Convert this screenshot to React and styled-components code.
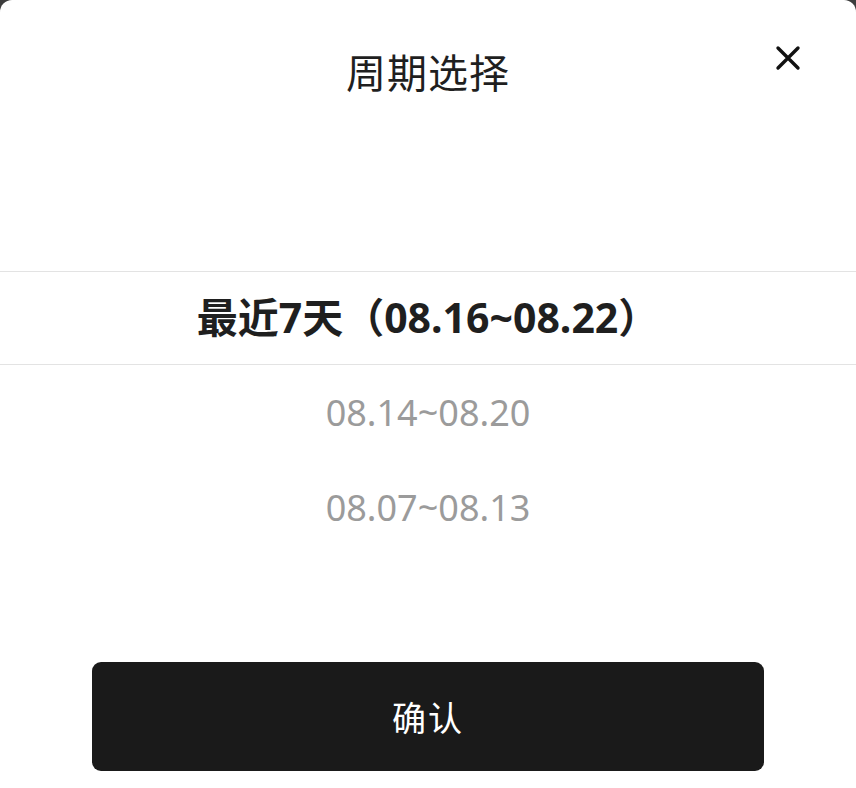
import React, { useState } from "react";
import styled, { createGlobalStyle } from "styled-components";

const GlobalStyle = createGlobalStyle`
  html, body {
    margin: 0;
    padding: 0;
    background: #3d3d3d;
  }
  * {
    box-sizing: border-box;
  }
`;

const Sheet = styled.div`
  display: flex;
  flex-direction: column;
  height: 788px;
  background: #ffffff;
  border-radius: 12px 12px 0 0;
  font-family: "Noto Sans", "Noto Sans CJK SC", sans-serif;
  overflow: hidden;
`;

const Header = styled.div`
  display: grid;
  grid-template-columns: 1fr auto 1fr;
  align-items: center;
  height: 142px;
`;

const Title = styled.h1`
  grid-column: 2;
  margin: 0;
  font-size: 40px;
  font-weight: 400;
  color: #1f1f1f;
  letter-spacing: 1px;
`;

const CloseButton = styled.button`
  grid-column: 3;
  justify-self: end;
  align-self: start;
  margin: 44px 54px 0 0;
  width: 28px;
  height: 28px;
  padding: 0;
  border: none;
  background: transparent;
  display: flex;
  align-items: center;
  justify-content: center;
  cursor: pointer;
`;

const Picker = styled.div`
  display: flex;
  flex-direction: column;
  margin-top: 129px;
`;

const Option = styled.div`
  display: flex;
  align-items: center;
  justify-content: center;
  height: ${(p) => (p.$active ? "94px" : "95px")};
  padding-bottom: ${(p) => (p.$active ? "7px" : "0")};
  font-size: ${(p) => (p.$active ? "41px" : "36px")};
  font-weight: ${(p) => (p.$active ? 700 : 400)};
  color: ${(p) => (p.$active ? "#1f1f1f" : "#9b9b9b")};
  border-top: ${(p) => (p.$active ? "1px solid #e3e3e3" : "none")};
  border-bottom: ${(p) => (p.$active ? "1px solid #e3e3e3" : "none")};
  cursor: pointer;
`;

const Footer = styled.div`
  display: flex;
  padding: 107px 92px 0;
`;

const ConfirmButton = styled.button`
  flex: 1;
  height: 109px;
  border: none;
  border-radius: 9px;
  background: #1a1a1a;
  color: #ffffff;
  font-family: inherit;
  font-size: 34px;
  letter-spacing: 2px;
  cursor: pointer;
`;

const periods = [
  "最近7天（08.16~08.22）",
  "08.14~08.20",
  "08.07~08.13",
];

export default function App() {
  const [selected, setSelected] = useState(0);

  return (
    <>
      <GlobalStyle />
      <Sheet>
        <Header>
          <Title>周期选择</Title>
          <CloseButton aria-label="关闭">
            <svg width="26" height="26" viewBox="0 0 26 26">
              <path
                d="M3 3 L23 23 M23 3 L3 23"
                stroke="#111"
                strokeWidth="3.4"
                strokeLinecap="round"
              />
            </svg>
          </CloseButton>
        </Header>
        <Picker>
          {periods.map((p, i) => (
            <Option key={p} $active={i === selected} onClick={() => setSelected(i)}>
              {p}
            </Option>
          ))}
        </Picker>
        <Footer>
          <ConfirmButton>确认</ConfirmButton>
        </Footer>
      </Sheet>
    </>
  );
}
